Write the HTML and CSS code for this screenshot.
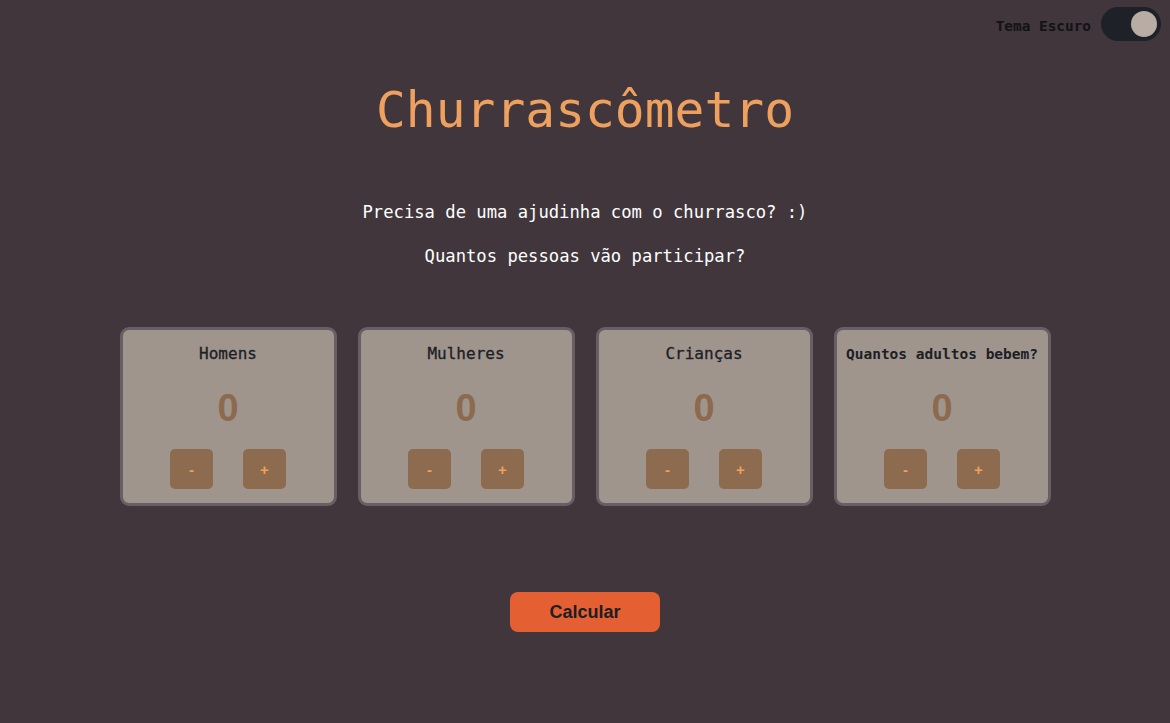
FILE: index.html
```html
<!DOCTYPE html>
<html lang="pt-BR">
<head>
<meta charset="utf-8">
<title>Churrascômetro</title>
<link rel="stylesheet" href="styles.css">
</head>
<body>
<header class="topbar">
  <span class="theme-label">Tema Escuro</span>
  <span class="toggle"><span class="knob"></span></span>
</header>
<main class="main">
  <h1 class="title">Churrascômetro</h1>
  <p class="intro">Precisa de uma ajudinha com o churrasco? :)</p>
  <p class="intro second">Quantos pessoas vão participar?</p>
  <section class="cards">
    <div class="card">
      <h3 class="card-title">Homens</h3>
      <div class="count">0</div>
      <div class="buttons"><button class="step">-</button><button class="step">+</button></div>
    </div>
    <div class="card">
      <h3 class="card-title">Mulheres</h3>
      <div class="count">0</div>
      <div class="buttons"><button class="step">-</button><button class="step">+</button></div>
    </div>
    <div class="card">
      <h3 class="card-title">Crianças</h3>
      <div class="count">0</div>
      <div class="buttons"><button class="step">-</button><button class="step">+</button></div>
    </div>
    <div class="card">
      <h3 class="card-title small">Quantos adultos bebem?</h3>
      <div class="count">0</div>
      <div class="buttons"><button class="step">-</button><button class="step">+</button></div>
    </div>
  </section>
  <button class="calc">Calcular</button>
</main>
</body>
</html>
```
FILE: styles.css
```css
* { box-sizing: border-box; }
html, body { margin: 0; padding: 0; }
body {
  background: #40363c;
  font-family: "DejaVu Sans Mono", "Liberation Mono", monospace;
  color: #ffffff;
  height: 723px;
  overflow: hidden;
}
.topbar {
  display: flex;
  justify-content: flex-end;
  align-items: center;
  gap: 10px;
  padding: 7px 9px 0 0;
  height: 41px;
}
.theme-label {
  font-size: 14.4px;
  font-weight: bold;
  color: #111315;
  position: relative;
  top: 2px;
}
.toggle {
  width: 60px;
  height: 34px;
  border-radius: 17px;
  background: #1e2128;
  display: flex;
  align-items: center;
  justify-content: flex-end;
  padding-right: 4px;
}
.knob {
  width: 26px;
  height: 26px;
  border-radius: 50%;
  background: #b8aca4;
}
.main {
  display: flex;
  flex-direction: column;
  align-items: center;
}
.title {
  margin: 39px 0 0 0;
  font-size: 49.6px;
  font-weight: normal;
  line-height: 60px;
  color: #eea05f;
}
.intro {
  margin: 61px 0 0 0;
  font-size: 17.2px;
  line-height: 22px;
}
.intro.second { margin-top: 22px; }
.cards {
  display: flex;
  gap: 21px;
  margin-top: 60px;
}
.card {
  width: 217px;
  height: 179px;
  background: #a0958d;
  border: 3px solid #6a5e66;
  border-radius: 9px;
  display: flex;
  flex-direction: column;
  align-items: center;
  padding-top: 14px;
}
.card-title {
  margin: 0;
  font-size: 16px;
  line-height: 20px;
  font-weight: normal;
  color: #1c2026;
  -webkit-text-stroke: 0.3px #1c2026;
}
.card-title.small { font-size: 14.5px; font-weight: bold; -webkit-text-stroke: 0; }
.count {
  margin-top: 24px;
  font-family: "Liberation Sans", Arial, sans-serif;
  font-size: 38px;
  line-height: 40px;
  font-weight: bold;
  color: #8c6a50;
}
.buttons {
  display: flex;
  gap: 30px;
  margin-top: 21px;
}
.step {
  width: 43px;
  height: 40px;
  border: none;
  border-radius: 5px;
  background: #8d6b4f;
  color: #f0a05c;
  font-family: "Liberation Sans", Arial, sans-serif;
  font-weight: bold;
  font-size: 15px;
  padding: 0;
}
.calc {
  margin-top: 86px;
  width: 150px;
  height: 40px;
  border: none;
  border-radius: 8px;
  background: #e45f32;
  color: #1b1e24;
  font-family: "Liberation Sans", Arial, sans-serif;
  font-weight: bold;
  font-size: 18px;
  padding: 0;
}
```
